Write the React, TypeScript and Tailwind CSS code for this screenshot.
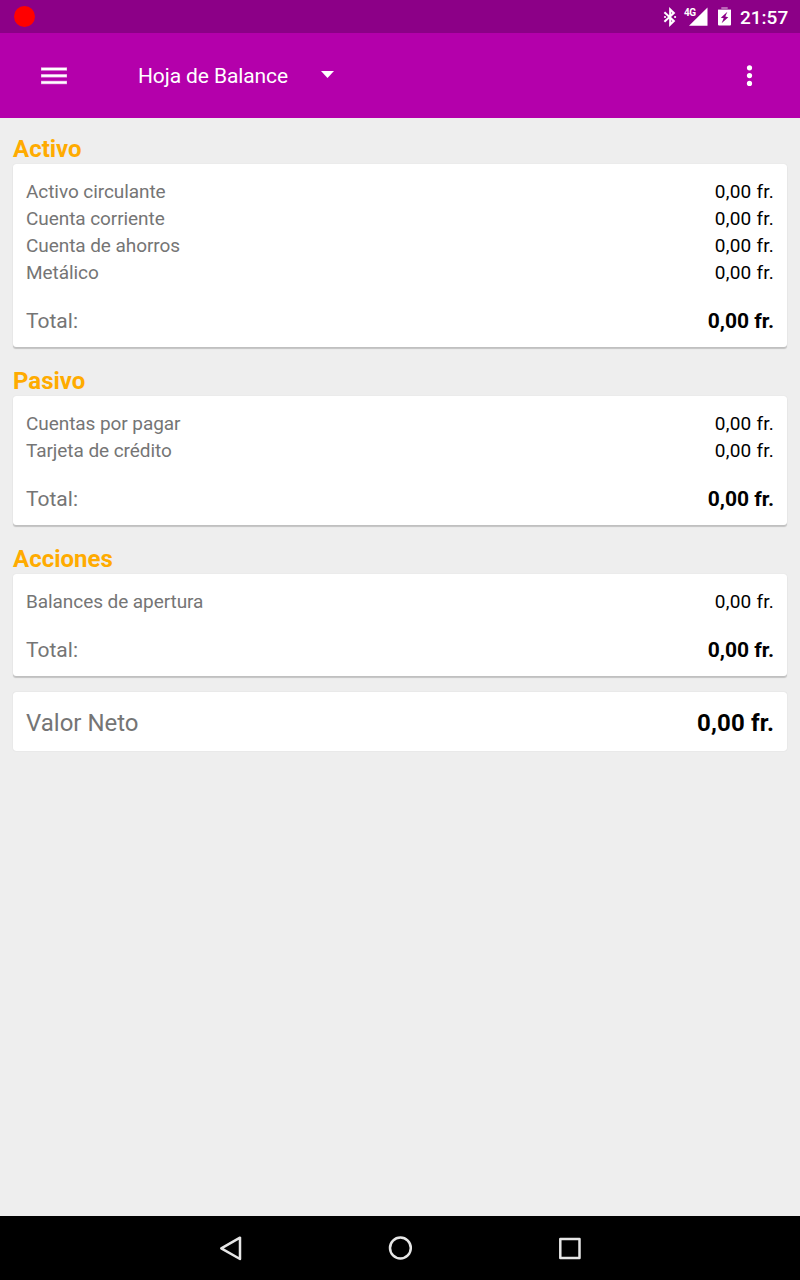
type Row = { name: string; amount: string };

const sections: { title: string; rows: Row[]; total: string }[] = [
  {
    title: "Activo",
    rows: [
      { name: "Activo circulante", amount: "0,00 fr." },
      { name: "Cuenta corriente", amount: "0,00 fr." },
      { name: "Cuenta de ahorros", amount: "0,00 fr." },
      { name: "Metálico", amount: "0,00 fr." },
    ],
    total: "0,00 fr.",
  },
  {
    title: "Pasivo",
    rows: [
      { name: "Cuentas por pagar", amount: "0,00 fr." },
      { name: "Tarjeta de crédito", amount: "0,00 fr." },
    ],
    total: "0,00 fr.",
  },
  {
    title: "Acciones",
    rows: [{ name: "Balances de apertura", amount: "0,00 fr." }],
    total: "0,00 fr.",
  },
];

function StatusBar() {
  return (
    <div className="flex h-[33px] shrink-0 items-center bg-[#8c0087] pr-[11px] pl-[13.5px] text-white">
      <div className="size-[21px] rounded-full bg-[#ff0000]" />
      <svg className="ml-auto h-[20px] w-[14px]" viewBox="0 0 14 20" fill="none" stroke="white" strokeWidth="2.1">
        <path d="M1.4 5.2 L10.8 13.9 L7.2 17.4 V2.6 L10.8 6.1 L1.4 14.8" />
        <circle cx="2" cy="10" r="1.1" fill="white" stroke="none" />
        <circle cx="12.1" cy="10" r="1.1" fill="white" stroke="none" />
      </svg>
      <div className="ml-[7px] flex h-[20px] w-[24px]">
        <span className="-mr-[7px] w-[12px] text-[10px] leading-[11px] font-bold tracking-[-0.5px]">4G</span>
        <svg className="h-[19px] w-[19px] shrink-0" viewBox="0 0 19 19" fill="white">
          <path d="M18.5 0.5 V18.7 H0 Z" />
        </svg>
      </div>
      <svg className="ml-[10px] h-[20px] w-[13px]" viewBox="0 0 13 20">
        <path d="M3.3 0 H9.7 V2 H13 V4 H0 V2 H3.3 Z" fill="white" fillOpacity="0.4" />
        <path d="M0 3 H13 V17.5 Q13 18.5 12 18.5 H1 Q0 18.5 0 17.5 Z" fill="white" />
        <path d="M9.4 4.8 L2.8 10.7 L5.7 11.3 L3.6 16.2 L10.3 10.2 L7.3 9.6 Z" fill="#8c0087" />
      </svg>
      <span className="mt-[2px] ml-[9px] w-[49px] text-[19px] leading-[22px] font-medium whitespace-nowrap">21:57</span>
    </div>
  );
}

function AppBar() {
  return (
    <header className="flex h-[85px] shrink-0 items-center bg-[#b400ab] pr-[47px] pl-[41px] text-white">
      <svg className="h-[20px] w-[26px]" viewBox="0 0 26 20" fill="white">
        <rect y="1.3" width="26" height="3.4" fillOpacity="0.65" />
        <rect y="8.1" width="26" height="3.4" fillOpacity="0.65" />
        <rect y="14.8" width="26" height="3.4" fillOpacity="0.65" />
        <rect x="0.5" y="2" width="25" height="2" />
        <rect x="0.5" y="8.8" width="25" height="2" />
        <rect x="0.5" y="15.5" width="25" height="2" />
      </svg>
      <h1 className="ml-[71px] w-[150px] text-[21px] leading-[28px] tracking-[-0.11px] whitespace-nowrap">
        Hoja de Balance
      </h1>
      <svg className="mb-[2px] ml-[33px] h-[7px] w-[13px]" viewBox="0 0 13 7" fill="white">
        <path d="M0 0 H13 L6.5 7 Z" />
      </svg>
      <svg className="ml-auto h-[22px] w-[7px]" viewBox="0 0 7 22" fill="white">
        <circle cx="3.5" cy="2.8" r="2.6" />
        <circle cx="3.5" cy="10.6" r="2.6" />
        <circle cx="3.5" cy="18.4" r="2.6" />
      </svg>
    </header>
  );
}

function NavigationBar() {
  return (
    <nav className="flex h-[64px] shrink-0 items-center justify-center gap-[142px] bg-black">
      <svg className="size-[28px]" viewBox="0 0 28 28" fill="none" stroke="#e6e6e6" strokeWidth="2.5" strokeLinejoin="round">
        <path d="M24 3.7 V25 L5.3 14.4 Z" />
      </svg>
      <svg className="size-[28px]" viewBox="0 0 28 28" fill="none" stroke="#e6e6e6" strokeWidth="2.5">
        <circle cx="14.4" cy="14" r="10.4" />
      </svg>
      <svg className="size-[28px]" viewBox="0 0 28 28" fill="none" stroke="#e6e6e6" strokeWidth="2.5" strokeLinejoin="round">
        <rect x="4.3" y="5.1" width="19.2" height="19" />
      </svg>
    </nav>
  );
}

export default function App() {
  return (
    <div className="flex h-[1280px] w-[800px] flex-col overflow-hidden bg-[#eeeeee] font-[Roboto,sans-serif]">
      <StatusBar />
      <AppBar />
      <main className="flex-1 px-[13px] pt-[15px]">
        <div className="flex flex-col gap-[18px]">
          {sections.map((section) => (
            <section key={section.title}>
              <h2 className="h-[31px] text-[24px] leading-[32px] font-bold text-[#ffab00]">{section.title}</h2>
              <div className="rounded-[3px] bg-white px-[13px] pt-[14px] pb-[12px] shadow-[0_2px_1px_rgba(0,0,0,0.18),0_0_1px_rgba(0,0,0,0.15)]">
                {section.rows.map((row) => (
                  <div key={row.name} className="flex h-[27px] justify-between text-[19px] leading-[27px]">
                    <span className="tracking-[-0.07px] text-[#757575]">{row.name}</span>
                    <span className="tracking-[0.22px] text-black">{row.amount}</span>
                  </div>
                ))}
                <div className="mt-[21px] flex h-[28px] justify-between text-[21px] leading-[28px]">
                  <span className="text-[#757575]">Total:</span>
                  <span className="font-bold text-black">{section.total}</span>
                </div>
              </div>
            </section>
          ))}
        </div>
        <div className="mt-[16px] flex h-[59px] justify-between rounded-[3px] bg-white px-[13px] text-[24px] leading-[62px] shadow-[0_0_1px_rgba(0,0,0,0.2)]">
          <span className="text-[#757575]">Valor Neto</span>
          <span className="font-bold tracking-[0.15px] text-black">0,00 fr.</span>
        </div>
      </main>
      <NavigationBar />
    </div>
  );
}
